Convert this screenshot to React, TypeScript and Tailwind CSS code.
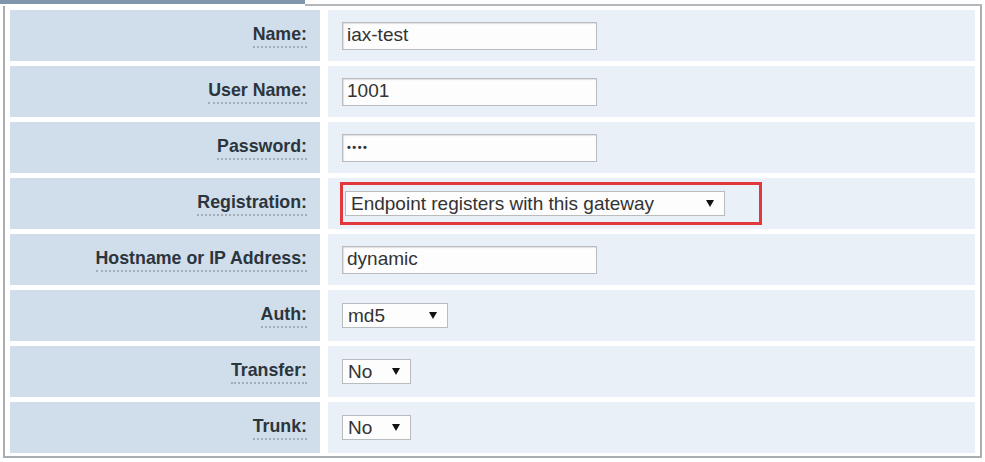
import React from "react";

type Control =
  | { kind: "input"; value: string; width: string; masked?: boolean }
  | { kind: "select"; value: string; width: string; highlight?: boolean };

interface Row {
  label: string;
  control: Control;
}

const rows: Row[] = [
  { label: "Name:", control: { kind: "input", value: "iax-test", width: "w-[255px]" } },
  { label: "User Name:", control: { kind: "input", value: "1001", width: "w-[255px]" } },
  { label: "Password:", control: { kind: "input", value: "••••", width: "w-[255px]", masked: true } },
  {
    label: "Registration:",
    control: { kind: "select", value: "Endpoint registers with this gateway", width: "w-[380px]", highlight: true },
  },
  { label: "Hostname or IP Address:", control: { kind: "input", value: "dynamic", width: "w-[255px]" } },
  { label: "Auth:", control: { kind: "select", value: "md5", width: "w-[106px]" } },
  { label: "Transfer:", control: { kind: "select", value: "No", width: "w-[69px]" } },
  { label: "Trunk:", control: { kind: "select", value: "No", width: "w-[69px]" } },
];

const Arrow = () => (
  <svg width="8" height="7" viewBox="0 0 8 7" className="shrink-0">
    <path d="M0 0 L8 0 L4 7 Z" fill="#111" />
  </svg>
);

const TextBox = ({ value, width, masked }: { value: string; width: string; masked?: boolean }) => (
  <div
    className={`${width} h-[28px] flex items-center bg-[#fdfdfd] border border-[#b9bcbf] shadow-[inset_1px_1px_1px_rgba(0,0,0,0.12)] pl-[4px] text-[#333] ${
      masked ? "text-[11px] tracking-[1.5px] font-bold" : "text-[19px]"
    }`}
  >
    {value}
  </div>
);

const SelectBox = ({ value, width }: { value: string; width: string }) => (
  <div
    className={`${width} h-[25px] flex items-center justify-between bg-[#fdfdfd] border border-[#b9bcbf] pl-[5px] pr-[10px] text-[19px] text-[#333]`}
  >
    <span className="leading-none">{value}</span>
    <Arrow />
  </div>
);

const App = () => {
  return (
    <div className="w-[985px] h-[462px] bg-white overflow-hidden font-['Liberation_Sans',Arial,sans-serif]">
      <div className="flex items-start h-[6px] w-[982px]">
        <div className="w-[305px] h-[4px] bg-[#8097ab]" />
        <div className="flex-1 h-[6px] border-b-2 border-[#b3b8bd]" />
      </div>
      <div className="ml-[3px] w-[979px] border-x-2 border-b-2 border-[#a9aeb3] px-[5px] pt-[4px] pb-[3px] flex flex-col gap-[5px]">
        {rows.map((row) => (
          <div key={row.label} className="flex h-[51px] gap-[8px]">
            <div className="w-[310px] bg-[#cfdeea] flex items-center justify-end pr-[13px] pt-[3px]">
              <span className="text-[17.8px] font-bold text-[#2c353d] leading-none pb-[3px] border-b-2 border-dotted border-[#a3acb4]">
                {row.label}
              </span>
            </div>
            <div className="flex-1 bg-[#eaf0f7] flex items-center pl-[14px]">
              {row.control.kind === "input" ? (
                <TextBox value={row.control.value} width={row.control.width} masked={row.control.masked} />
              ) : row.control.highlight ? (
                <div className="-ml-[2px] border-[3px] border-[#e0383b] pl-[2px] pr-[34px] py-[6px]">
                  <SelectBox value={row.control.value} width={row.control.width} />
                </div>
              ) : (
                <SelectBox value={row.control.value} width={row.control.width} />
              )}
            </div>
          </div>
        ))}
      </div>
    </div>
  );
};

export default App;
